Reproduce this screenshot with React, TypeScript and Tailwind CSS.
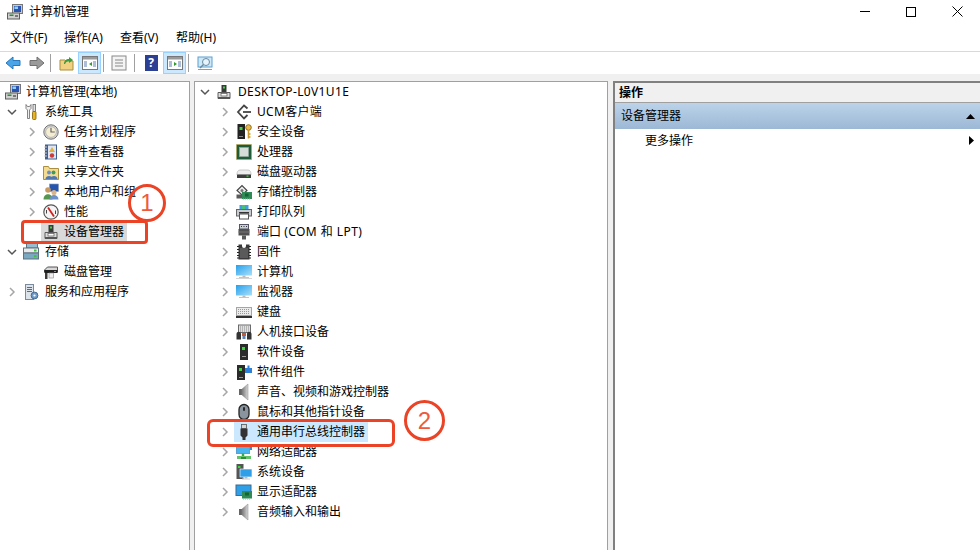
import { FC, ReactNode } from "react";

const S: FC<{ children: ReactNode; className?: string }> = ({ children, className }) => (
  <svg width={16} height={16} viewBox="0 0 16 16" overflow="visible" className={`shrink-0 ${className ?? ""}`}>
    {children}
  </svg>
);

const HostIcon = () => (
  <S>
    <rect x="5.5" y="1" width="5" height="8" fill="#3a3a3a" />
    <rect x="7" y="2.5" width="2" height="2" fill="#3fd43f" />
    <path d="M2 8.5h12v6H2z" fill="#dcdcdc" stroke="#5c5c5c" />
    <rect x="5" y="9.5" width="6" height="2.5" fill="#fff" stroke="#555" strokeWidth=".7" />
    <rect x="2" y="13" width="12" height="2" fill="#555" />
  </S>
);

const ComputerMgmt = () => (
  <S>
    <rect x="5.5" y="0.5" width="10" height="9" fill="#c4c9d2" stroke="#777" />
    <rect x="7" y="2" width="7" height="6" fill="#2a53b0" />
    <rect x="7.5" y="2.5" width="3.5" height="2.5" fill="#8fd0f5" />
    <rect x="0.5" y="9" width="12" height="6" fill="#d0d0d0" stroke="#5c5c5c" />
    <rect x="2.5" y="10.5" width="4" height="1.5" fill="#2f8a3a" />
    <rect x="8" y="11" width="3" height="2" fill="#777" />
  </S>
);

const Tools = () => (
  <S>
    <path d="M3 0.5v4l1.5 1.5v8.5h2V6L8 4.5v-4L6.5 2.5h-2z" fill="#efefef" stroke="#666" strokeWidth=".8" />
    <rect x="10" y="0.5" width="2.5" height="7" fill="#e2e2e2" stroke="#666" strokeWidth=".8" />
    <rect x="9.5" y="7.5" width="3.5" height="8" rx="1" fill="#eab41c" stroke="#7d5e0a" strokeWidth=".8" />
  </S>
);

const Clock = () => (
  <S>
    <circle cx="8" cy="8" r="7.2" fill="#d8d8d8" stroke="#707070" />
    <circle cx="8" cy="8" r="5.4" fill="#f5edd2" stroke="#9a9a9a" strokeWidth=".6" />
    <path d="M8 3.8V8h3.8" fill="none" stroke="#666" strokeWidth="1.2" />
  </S>
);

const EventLog = () => (
  <S>
    <rect x="2" y="0.5" width="12" height="15" fill="#405f8f" />
    <rect x="5" y="1.5" width="8" height="13" fill="#dfe6ef" />
    <path d="M1 3h3M1 6h3M1 9h3M1 12h3" stroke="#ccc" />
    <path d="M9 3l3 5H6z" fill="#e0b040" />
    <circle cx="9" cy="11.5" r="2.2" fill="#cc3a3a" />
  </S>
);

const SharedFolder = () => (
  <S>
    <path d="M0.5 2.5h5l1 2h9v11H0.5z" fill="#f3dc92" stroke="#a98f3e" />
    <circle cx="6" cy="8.5" r="2" fill="#6c8fc4" />
    <circle cx="10.5" cy="8.5" r="2" fill="#3f9b59" />
    <path d="M2.5 15c0-4 7-4 7 0zM7.5 15c0-4 7-4 7 0z" fill="#4f78b2" />
  </S>
);

const Users = () => (
  <S>
    <rect x="6.5" y="0" width="9" height="7.5" fill="#2456b0" stroke="#8a9ab5" strokeWidth=".6" />
    <circle cx="5" cy="6" r="2.8" fill="#c99a64" />
    <path d="M0.5 15.5c0-7 9-7 9 0z" fill="#569650" />
    <circle cx="11" cy="8.5" r="2.5" fill="#d8b48a" />
    <path d="M6.5 15.5c0-6 9-6 9 0z" fill="#6c90c8" />
  </S>
);

const Perf = () => (
  <S>
    <circle cx="8" cy="8" r="7.2" fill="#f4f4f4" stroke="#555" strokeWidth="1.2" />
    <path d="M5 3.5l6 9" stroke="#d02020" strokeWidth="1.8" />
    <path d="M3.5 9.5V6M12.5 6.5v3.5" stroke="#444" />
  </S>
);

const Storage = () => (
  <S>
    <rect x="3.5" y="-1" width="11" height="5" fill="#97bcd0" stroke="#5f7280" />
    <rect x="0.5" y="4" width="15" height="5" fill="#eaeaea" stroke="#5f7280" />
    <rect x="0.5" y="9" width="15" height="6" fill="#7aa8c0" stroke="#5f7280" />
    <rect x="11" y="5.5" width="2.5" height="2" fill="#3fc43f" />
    <rect x="11" y="11" width="2.5" height="2" fill="#3fc43f" />
  </S>
);

const DiskMgmt = () => (
  <S>
    <path d="M1.5 6l3-3h10v5h-13z" fill="#d8d8d8" stroke="#555" />
    <rect x="1.5" y="6" width="13" height="3" fill="#1f1f1f" />
    <rect x="11" y="7" width="2" height="1" fill="#3fc43f" />
    <rect x="2" y="9" width="2.5" height="6" fill="#3a3a3a" />
    <rect x="6" y="9" width="4.5" height="5" fill="#f0f0f0" stroke="#888" strokeWidth=".6" />
  </S>
);

const Services = () => (
  <S>
    <rect x="2.5" y="0.5" width="8" height="15" fill="#dde3ea" stroke="#7a8a9a" />
    <path d="M4 3.5h5M4 5.5h5M4 7.5h5" stroke="#667" />
    <circle cx="11.5" cy="11.5" r="3.4" fill="#6f9bc9" stroke="#49698f" />
    <circle cx="11.5" cy="11.5" r="1.1" fill="#fff" />
  </S>
);

const Ucm = () => (
  <S>
    <path d="M11.5 4.5L8 1.5 2 8l6 6.5 3.5-3.5" fill="none" stroke="#444" strokeWidth="1.8" />
    <path d="M7 8h8" stroke="#444" strokeWidth="1.8" />
  </S>
);

const Security = () => (
  <S>
    <rect x="1.5" y="0" width="7.5" height="15" fill="#222" />
    <rect x="3.5" y="3" width="3" height="3" fill="#3fd43f" />
    <rect x="3" y="12" width="4" height="1" fill="#888" />
    <circle cx="12.5" cy="3.5" r="2.8" fill="#e8b84a" stroke="#96701a" />
    <path d="M12.5 6v8.5M12.5 10h2M12.5 13h2" stroke="#c9982a" strokeWidth="1.6" />
  </S>
);

const Cpu = () => (
  <S>
    <rect x="0.5" y="0.5" width="15" height="15" fill="#1f5c3a" stroke="#c0a23e" strokeDasharray="1 1" />
    <rect x="2" y="2" width="12" height="12" fill="#1f5c3a" />
    <rect x="3.5" y="3.5" width="9" height="9" fill="#d6ddd8" stroke="#9aa8a0" strokeWidth=".7" />
  </S>
);

const Disk = () => (
  <S>
    <path d="M1 10c0-2 1-4 3-4h8c2 0 3 2 3 4v1H1z" fill="#ededed" stroke="#b5b5b5" strokeWidth=".7" />
    <rect x="1" y="10.5" width="14" height="3.5" rx=".5" fill="#3c3c3c" />
    <rect x="10.5" y="11.5" width="2" height="1.2" fill="#3fd43f" />
  </S>
);

const StorageCtl = () => (
  <S>
    <path d="M1 6.5L6 1.5l5 5-5 4.5z" fill="#ececec" stroke="#444" strokeWidth="1.1" />
    <circle cx="6" cy="6.5" r="1.5" fill="#777" />
    <rect x="0.5" y="10.5" width="6.5" height="4" fill="#5a5a5a" />
    <rect x="6" y="8" width="10" height="7" fill="#2f8a56" />
    <rect x="9" y="9.5" width="3.5" height="3" fill="#116633" />
    <path d="M7 15h8" stroke="#d8b030" strokeDasharray="1 1" />
  </S>
);

const Printer = () => (
  <S>
    <rect x="3.5" y="1" width="9" height="5" fill="#3f9fe0" />
    <rect x="6" y="1" width="3" height="5" fill="#49c07a" />
    <rect x="0.5" y="5.5" width="15" height="6.5" fill="#c9ccd0" stroke="#666" />
    <rect x="3" y="8" width="10" height="1.5" fill="#333" />
    <rect x="3.5" y="10" width="9" height="5" fill="#fff" stroke="#555" />
  </S>
);

const Port = () => (
  <S>
    <rect x="3.5" y="0.5" width="9" height="4.5" fill="#c8d0d0" stroke="#556" />
    <path d="M5 2.5h1M7.5 2.5h1M10 2.5h1" stroke="#334" />
    <rect x="2.5" y="5" width="11" height="6.5" fill="#505050" />
    <path d="M2.5 8h11" stroke="#777" />
    <rect x="6" y="11.5" width="4" height="4" fill="#5a5a5a" />
  </S>
);

const Firmware = () => (
  <S>
    <rect x="2.5" y="0.5" width="11" height="15" fill="#3a3a3a" />
    <path d="M1 2.5h2M1 5.5h2M1 8.5h2M1 11.5h2M1 14h2M13 2.5h2M13 5.5h2M13 8.5h2M13 11.5h2M13 14h2" stroke="#222" />
    <path d="M6 0h4v2a2 2 0 0 1-4 0z" fill="#fff" />
    <rect x="4" y="4" width="8" height="10" fill="#5a5a5a" />
  </S>
);

const MonitorGlyph: FC<{ id: string }> = ({ id }) => (
  <>
    <defs>
      <linearGradient id={id} x1="0" y1="0" x2="1" y2="1">
        <stop offset="0" stopColor="#28a0ea" />
        <stop offset="1" stopColor="#a6e0fb" />
      </linearGradient>
    </defs>
    <rect x="0" y="1" width="16" height="10.5" fill={`url(#${id})`} />
    <rect x="6.5" y="11.5" width="3" height="1.5" fill="#bbb" />
    <rect x="3" y="13" width="10" height="1" fill="#c5c5c5" />
  </>
);

const Computer = () => (
  <S>
    <MonitorGlyph id="mon-a" />
    <rect x="0" y="14" width="16" height="1" fill="#d5d5d5" />
  </S>
);

const Monitor = () => (
  <S>
    <MonitorGlyph id="mon-b" />
  </S>
);

const Keyboard = () => (
  <S>
    <rect x="0.5" y="3.5" width="15" height="8" fill="#ececec" stroke="#a5a5a5" />
    <path d="M2 5.5h12M2 7.5h12M2 9.5h12" stroke="#9a9a9a" strokeDasharray="1 1" />
    <rect x="0" y="12" width="16" height="2" fill="#333" />
  </S>
);

const Hid = () => (
  <S>
    <rect x="2.5" y="1" width="12" height="7.5" fill="#e0e0e0" stroke="#6a6a6a" />
    <path d="M4 3h9M4 5h9M4 7h9" stroke="#888" strokeDasharray="1 1" />
    <path d="M0.5 15.5V10c0-3 4.5-3 4.5 0v5.5zM11 15.5V10c0-3 4.5-3 4.5 0v5.5z" fill="#333" />
    <rect x="6" y="9" width="4" height="3" fill="#c05a3a" />
    <rect x="6.5" y="12" width="3" height="3" fill="#5f82b5" />
  </S>
);

const SoftDev = () => (
  <S>
    <rect x="4" y="0" width="8" height="16" fill="#2b2b2b" />
    <rect x="6" y="3" width="3" height="3" fill="#3fd43f" />
    <rect x="6" y="12" width="4" height="1" fill="#999" />
  </S>
);

const SoftComp = () => (
  <S>
    <rect x="1" y="1" width="8" height="15" fill="#2b2b2b" />
    <rect x="3" y="4" width="3" height="3" fill="#3fd43f" />
    <rect x="3" y="13" width="4" height="1" fill="#999" />
    <path d="M9 4h2.5V1.5h2V4H16v5H9z" fill="#2f80d8" />
  </S>
);

const SpeakerGlyph: FC<{ id: string }> = ({ id }) => (
  <>
    <defs>
      <linearGradient id={id} x1="0" y1="0" x2="1" y2="0">
        <stop offset="0" stopColor="#777" />
        <stop offset="1" stopColor="#d8d8d8" />
      </linearGradient>
    </defs>
    <rect x="3" y="5" width="3" height="6" fill="#666" />
    <path d="M6 5l6-5v16l-6-5z" fill={`url(#${id})`} stroke="#8a8a8a" strokeWidth=".5" />
  </>
);

const Speaker = () => (
  <S>
    <SpeakerGlyph id="spk-a" />
  </S>
);

const Speaker2 = () => (
  <S>
    <SpeakerGlyph id="spk-b" />
  </S>
);

const Mouse = () => (
  <S>
    <rect x="3" y="0.5" width="10" height="15" rx="5" fill="#8a949e" stroke="#222" strokeWidth="1.3" />
    <rect x="7" y="3" width="2" height="4" rx="1" fill="#2b2b2b" />
  </S>
);

const Usb = () => (
  <S>
    <rect x="5.5" y="0.5" width="5" height="4" fill="#d5d5d5" stroke="#555" strokeWidth=".8" />
    <path d="M4.5 4.5h7v7l-2 2v2.5h-3V13.5l-2-2z" fill="#333" />
  </S>
);

const Network = () => (
  <S>
    <rect x="9" y="0" width="7" height="6" fill="#2f8fd8" />
    <rect x="0.5" y="1.5" width="13" height="8" fill="#4ab4ee" stroke="#5aa0d0" />
    <path d="M7 9.5v3" stroke="#3aa84a" strokeWidth="2.5" />
    <rect x="1" y="12" width="14" height="3" fill="#64c36a" />
    <rect x="5" y="13" width="5" height="2" fill="#2f8a3a" />
  </S>
);

const SysDev = () => (
  <S>
    <rect x="0.5" y="0" width="7" height="15" fill="#555" />
    <rect x="2" y="2" width="2.5" height="2" fill="#3fd43f" />
    <rect x="4" y="5" width="12" height="8" fill="#2f9fe8" stroke="#fff" strokeWidth=".6" />
    <rect x="8.5" y="13" width="3" height="1.5" fill="#bbb" />
    <rect x="6" y="14.5" width="8" height="1" fill="#ccc" />
  </S>
);

const Display = () => (
  <S>
    <rect x="0" y="1" width="15" height="10.5" fill="#2f9fe8" stroke="#3d6a90" />
    <rect x="6" y="7" width="10" height="7.5" fill="#2f8a56" />
    <rect x="9" y="8.5" width="4" height="3" fill="#116633" />
    <path d="M7 15h8" stroke="#d8b030" strokeDasharray="1 1" />
  </S>
);

const Chevron: FC<{ open?: boolean }> = ({ open }) => (
  <svg width="10" height="10" viewBox="0 0 10 10" className="shrink-0">
    {open ? (
      <path d="M1 3l4 4 4-4" fill="none" stroke="#555" strokeWidth="1.5" />
    ) : (
      <path d="M3 1l4 4-4 4" fill="none" stroke="#a6a6a6" strokeWidth="1.5" />
    )}
  </svg>
);

const Row: FC<{
  chevX: number;
  open?: boolean;
  leaf?: boolean;
  icon: ReactNode;
  label: ReactNode;
  sel?: string;
  gap?: number;
}> = ({ chevX, open, leaf, icon, label, sel, gap = 5 }) => (
  <div className="flex h-5 items-center whitespace-nowrap" style={{ paddingLeft: chevX }}>
    <span className="flex w-[10px] justify-center">{!leaf && <Chevron open={open} />}</span>
    <span className={`ml-[4px] flex h-5 items-center pl-[2px] pr-[3px] ${sel ?? ""}`}>
      {icon}
      <span style={{ marginLeft: gap }}>{label}</span>
    </span>
  </div>
);

const ToolBtn: FC<{ children: ReactNode }> = ({ children }) => (
  <div className="flex h-[22px] w-[23px] items-center justify-center border border-[#99d1ff] bg-[#cce8ff]">
    {children}
  </div>
);

const Sep: FC<{ className: string }> = ({ className }) => <div className={`h-[18px] w-px bg-[#a0a0a0] ${className}`} />;

const PaneGlyph: FC<{ right?: boolean }> = ({ right }) => (
  <svg width="16" height="14" viewBox="0 0 16 14">
    <rect x=".5" y=".5" width="15" height="13" fill="#fff" stroke="#777" />
    <rect x="1" y="1" width="14" height="2.5" fill="#9a9a9a" />
    <path d="M2 6h3M2 8h3M2 10h3M11 6h3M11 8h3M11 10h3" stroke="#5a7fb0" />
    {right ? <path d="M7 6l3 2-3 2z" fill="#2e9b2e" /> : <path d="M10 6L7 8l3 2z" fill="#2e9b2e" />}
  </svg>
);

const devices: [ReactNode, ReactNode, boolean?][] = [
  [<span className="tracking-[0.3px]">UCM客户端</span>, <Ucm />],
  ["安全设备", <Security />],
  ["处理器", <Cpu />],
  ["磁盘驱动器", <Disk />],
  ["存储控制器", <StorageCtl />],
  ["打印队列", <Printer />],
  [<span>端口 <span className="tracking-[0.45px]">(COM 和 LPT)</span></span>, <Port />],
  ["固件", <Firmware />],
  ["计算机", <Computer />],
  ["监视器", <Monitor />],
  ["键盘", <Keyboard />],
  ["人机接口设备", <Hid />],
  ["软件设备", <SoftDev />],
  ["软件组件", <SoftComp />],
  ["声音、视频和游戏控制器", <Speaker />],
  ["鼠标和其他指针设备", <Mouse />],
  ["通用串行总线控制器", <Usb />, true],
  ["网络适配器", <Network />],
  ["系统设备", <SysDev />],
  ["显示适配器", <Display />],
  ["音频输入和输出", <Speaker2 />],
];

export default function App() {
  return (
    <div className="relative flex h-[550px] w-[980px] flex-col overflow-hidden bg-white font-['Noto_Sans','Noto_Sans_CJK_SC',sans-serif] text-xs text-black">
      {/* title bar */}
      <div className="flex h-[23px] shrink-0 items-center">
        <div className="ml-[7px] flex items-center">
          <ComputerMgmt />
          <span className="ml-[6px]">计算机管理</span>
        </div>
        <div className="ml-auto flex items-center">
          <div className="flex w-[46px] justify-center">
            <div className="h-px w-[10px] bg-black" />
          </div>
          <div className="flex w-[46px] justify-center">
            <div className="h-[10px] w-[10px] border border-black" />
          </div>
          <div className="flex w-[46px] justify-center pl-px">
            <svg width="11" height="11" viewBox="0 0 11 11">
              <path d="M.5.5l10 10M10.5.5l-10 10" stroke="#000" />
            </svg>
          </div>
        </div>
      </div>

      {/* menu */}
      <div className="flex h-[28px] shrink-0 items-center pl-[10px] pt-[2px]">
        <span className="w-[54px]">文件(F)</span>
        <span className="w-[56px]">操作(A)</span>
        <span className="w-[56px]">查看(V)</span>
        <span>帮助(H)</span>
      </div>

      {/* toolbar */}
      <div className="flex h-[23px] shrink-0 items-center border-t border-[#d9d9d9] pl-px">
        <div className="flex w-6 justify-center">
          <svg width="16" height="14" viewBox="0 0 16 14">
            <path d="M8 1L1 7l7 6V9.5h7v-5H8z" fill="#4aa5e8" stroke="#2878bb" />
          </svg>
        </div>
        <div className="flex w-6 justify-center">
          <svg width="16" height="14" viewBox="0 0 16 14">
            <path d="M8 1l7 6-7 6V9.5H1v-5h7z" fill="#9a9a9a" stroke="#707070" />
          </svg>
        </div>
        <Sep className="ml-px" />
        <div className="ml-1 flex w-[23px] justify-center">
          <svg width="16" height="16" viewBox="0 0 16 16">
            <path d="M1 5h5l1 1h7v9H1z" fill="#f0d282" stroke="#a98f3e" />
            <path d="M5 9c0-3 2-5 5-5V2l4 3-4 3V6C8 6 7 7 6 9z" fill="#3f9b3f" />
          </svg>
        </div>
        <ToolBtn>
          <PaneGlyph />
        </ToolBtn>
        <Sep className="ml-[2px]" />
        <div className="ml-1 flex w-[22px] justify-center">
          <svg width="16" height="16" viewBox="0 0 16 16">
            <rect x="1" y="1" width="14" height="14" fill="#f4f4f4" stroke="#888" />
            <path d="M4 5h8M4 8h8M4 11h8" stroke="#888" />
          </svg>
        </div>
        <Sep className="ml-1" />
        <div className="ml-[5px] flex w-[22px] justify-center">
          <div className="flex h-4 w-[13px] items-center justify-center bg-[#2b3f94] text-[12px] font-bold leading-none text-white">
            ?
          </div>
        </div>
        <div className="ml-px">
          <ToolBtn>
            <PaneGlyph right />
          </ToolBtn>
        </div>
        <Sep className="ml-[2px]" />
        <div className="ml-[5px] flex w-[22px] justify-center">
          <svg width="17" height="15" viewBox="0 0 17 15">
            <rect x="1" y="1" width="14" height="10" fill="#cfe8f8" stroke="#5aa0d0" />
            <circle cx="9" cy="6" r="3.5" fill="#e8f4fc" stroke="#6a8aa0" />
            <path d="M6.5 8.5L3 12" stroke="#6a8aa0" strokeWidth="1.5" />
            <path d="M1 13.5h14" stroke="#999" />
          </svg>
        </div>
      </div>

      {/* panes */}
      <div className="flex min-h-0 flex-1 bg-[#f0f0f0] pt-[7px]">
        <div className="w-[190px] shrink-0 border-t border-r border-[#a0a0a0] bg-white">
          <div className="flex h-5 items-center pl-[5px]">
            <ComputerMgmt />
            <span className="ml-[5px]">计算机管理(本地)</span>
          </div>
          <Row chevX={7} open icon={<Tools />} label="系统工具" gap={6} />
          <Row chevX={27} icon={<Clock />} label="任务计划程序" />
          <Row chevX={27} icon={<EventLog />} label="事件查看器" />
          <Row chevX={27} icon={<SharedFolder />} label="共享文件夹" />
          <Row chevX={27} icon={<Users />} label="本地用户和组" />
          <Row chevX={27} icon={<Perf />} label="性能" />
          <Row chevX={27} leaf icon={<HostIcon />} label="设备管理器" sel="bg-[#d9d9d9]" />
          <Row chevX={7} open icon={<Storage />} label="存储" gap={6} />
          <Row chevX={27} leaf icon={<DiskMgmt />} label="磁盘管理" />
          <Row chevX={7} icon={<Services />} label="服务和应用程序" gap={6} />
        </div>
        <div className="ml-1 w-[414px] shrink-0 border-t border-r border-l border-[#a0a0a0] bg-white">
          <Row chevX={5} open icon={<HostIcon />} label={<span className="tracking-[0.35px]">DESKTOP-L0V1U1E</span>} gap={6} />
          {devices.map(([label, icon, sel], i) => (
            <Row key={i} chevX={25} icon={icon} label={label} sel={sel ? "bg-[#cce8ff]" : undefined} />
          ))}
        </div>
        <div className="ml-[5px] flex-1 border-t-2 border-l-2 border-[#808080] bg-white">
          <div className="flex h-5 items-center border-b border-[#a0a0a0] bg-[#f0f0f0] pl-[4px] font-bold">操作</div>
          <div className="flex h-[26px] items-center justify-between bg-gradient-to-b from-[#bcd3ea] to-[#9cb8d5] pl-[6px] pr-[5px]">
            <span>设备管理器</span>
            <svg width="9" height="5" viewBox="0 0 9 5">
              <path d="M4.5 0L9 5H0z" fill="#000" />
            </svg>
          </div>
          <div className="flex h-[23px] items-center justify-between pl-[30px] pr-[6px]">
            <span>更多操作</span>
            <svg width="5" height="9" viewBox="0 0 5 9">
              <path d="M0 0l5 4.5L0 9z" fill="#000" />
            </svg>
          </div>
        </div>
      </div>

      {/* red annotations */}
      <div className="absolute left-[21px] top-[220px] h-[24px] w-[127px] rounded-[4px] border-[3px] border-[#ea4326]" />
      <div className="absolute left-[207px] top-[419px] h-[28px] w-[188px] rounded-[6px] border-[3px] border-[#ea4326]" />
      <div className="absolute left-[128px] top-[184px] flex h-[38px] w-[38px] items-center justify-center rounded-full border-[3px] border-[#ea4326] font-['Liberation_Sans',sans-serif] text-[24px] text-[#ee5a3c]">
        1
      </div>
      <div className="absolute left-[404px] top-[400px] flex h-[41px] w-[41px] items-center justify-center rounded-full border-[3px] border-[#ea4326] font-['Liberation_Sans',sans-serif] text-[24px] text-[#ee5a3c]">
        2
      </div>
    </div>
  );
}
